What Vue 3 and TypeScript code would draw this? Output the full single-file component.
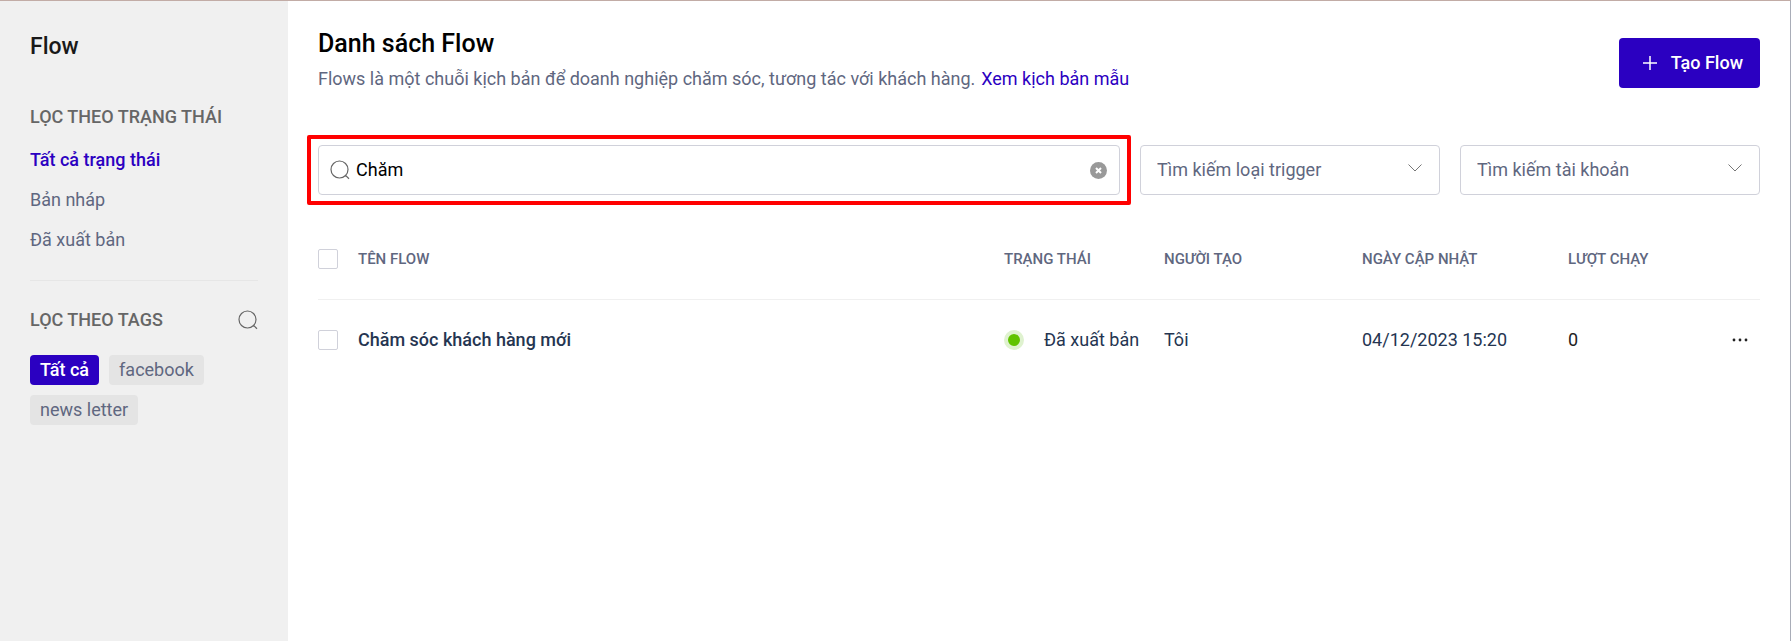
<script setup lang="ts">
import { computed, ref } from 'vue'

interface FlowRow {
  id: number
  name: string
  status: string
  author: string
  updatedAt: string
  runs: number
}

const statuses: string[] = ['Tất cả trạng thái', 'Bản nháp', 'Đã xuất bản']
const tags: string[] = ['Tất cả', 'facebook', 'news letter']

const activeStatus = ref('Tất cả trạng thái')
const activeTag = ref('Tất cả')
const keyword = ref('Chăm')
const trigger = ref('')
const account = ref('')
const selected = ref<number[]>([])

const rows: FlowRow[] = [
  {
    id: 1,
    name: 'Chăm sóc khách hàng mới',
    status: 'Đã xuất bản',
    author: 'Tôi',
    updatedAt: '04/12/2023 15:20',
    runs: 0,
  },
]

const visibleRows = computed(() =>
  rows.filter((row) => row.name.toLowerCase().includes(keyword.value.trim().toLowerCase())),
)

const allSelected = computed({
  get: () => visibleRows.value.length > 0 && selected.value.length === visibleRows.value.length,
  set: (value: boolean) => {
    selected.value = value ? visibleRows.value.map((row) => row.id) : []
  },
})
</script>

<template>
  <div class="layout">
    <aside class="sidebar">
      <h2 class="brand">Flow</h2>

      <h3 class="group-title">LỌC THEO TRẠNG THÁI</h3>
      <ul class="status-list">
        <li v-for="item in statuses" :key="item">
          <a
            href="#"
            class="status-link"
            :class="{ active: item === activeStatus }"
            @click.prevent="activeStatus = item"
          >{{ item }}</a>
        </li>
      </ul>

      <div class="tags-head">
        <h3 class="group-title">LỌC THEO TAGS</h3>
        <button type="button" class="icon-button" aria-label="Tìm tag">
          <svg class="search-icon" viewBox="0 0 20 20" aria-hidden="true">
            <circle cx="9.5" cy="9.5" r="8.5" />
            <path d="M15 15.8h1l3 2.900" />
          </svg>
        </button>
      </div>
      <div class="tags">
        <button
          v-for="tag in tags"
          :key="tag"
          type="button"
          class="tag"
          :class="{ active: tag === activeTag }"
          @click="activeTag = tag"
        >{{ tag }}</button>
      </div>
    </aside>

    <main class="main">
      <header class="header">
        <div class="intro">
          <h1 class="title">Danh sách Flow</h1>
          <p class="lead">
            <span>Flows là một chuỗi kịch bản để doanh nghiệp chăm sóc, tương tác với khách hàng.</span>
            <a href="#" class="sample-link">Xem kịch bản mẫu</a>
          </p>
        </div>
        <button type="button" class="create">
          <svg class="plus" viewBox="0 0 14 14" aria-hidden="true">
            <path d="M7 0v14M0 7h14" />
          </svg>
          <span>Tạo Flow</span>
        </button>
      </header>

      <div class="filters">
        <div class="search">
          <svg class="search-icon" viewBox="0 0 20 20" aria-hidden="true">
            <circle cx="9.5" cy="9.5" r="8.5" />
            <path d="M15 15.8h1l3 2.900" />
          </svg>
          <input v-model="keyword" type="text" class="search-input" aria-label="Tìm kiếm flow" />
          <button type="button" class="clear" aria-label="Xóa" @click="keyword = ''">
            <svg viewBox="0 0 17 17" aria-hidden="true">
              <circle cx="8.5" cy="8.5" r="8.5" />
              <path d="M6 6l5 5M11 6l-5 5" />
            </svg>
          </button>
        </div>
        <div class="select-box">
          <select v-model="trigger" class="select" aria-label="Loại trigger">
            <option value="">Tìm kiếm loại trigger</option>
          </select>
          <svg class="chevron" viewBox="0 0 14 8" aria-hidden="true"><path d="M.5 .5L7 7l6.500-6.500" /></svg>
        </div>
        <div class="select-box">
          <select v-model="account" class="select" aria-label="Tài khoản">
            <option value="">Tìm kiếm tài khoản</option>
          </select>
          <svg class="chevron" viewBox="0 0 14 8" aria-hidden="true"><path d="M.5 .5L7 7l6.500-6.500" /></svg>
        </div>
      </div>

      <table class="table">
        <colgroup>
          <col class="col-check" />
          <col />
          <col class="col-status" />
          <col class="col-author" />
          <col class="col-date" />
          <col class="col-runs" />
          <col class="col-more" />
        </colgroup>
        <thead>
          <tr>
            <th><input v-model="allSelected" type="checkbox" class="check" aria-label="Chọn tất cả" /></th>
            <th>TÊN FLOW</th>
            <th>TRẠNG THÁI</th>
            <th>NGƯỜI TẠO</th>
            <th>NGÀY CẬP NHẬT</th>
            <th>LƯỢT CHẠY</th>
            <th></th>
          </tr>
        </thead>
        <tbody>
          <tr v-for="row in visibleRows" :key="row.id">
            <td><input v-model="selected" type="checkbox" class="check" :value="row.id" :aria-label="row.name" /></td>
            <td class="name">{{ row.name }}</td>
            <td><span class="status"><i class="dot"></i>{{ row.status }}</span></td>
            <td>{{ row.author }}</td>
            <td>{{ row.updatedAt }}</td>
            <td class="runs">{{ row.runs }}</td>
            <td>
              <button type="button" class="more" aria-label="Thao tác">
                <svg viewBox="0 0 16 4" aria-hidden="true">
                  <circle cx="2" cy="2" r="1.400" />
                  <circle cx="8" cy="2" r="1.400" />
                  <circle cx="14" cy="2" r="1.400" />
                </svg>
              </button>
            </td>
          </tr>
        </tbody>
      </table>
    </main>
  </div>
</template>

<style>
body {
  margin: 0;
}
</style>

<style scoped>
* {
  box-sizing: border-box;
}

.layout {
  display: flex;
  min-height: 100vh;
  border-top: 1px solid #c2aca6;
  border-right: 1px solid #a9adb8;
  background: #fff;
  color: #253551;
  font-family: Roboto, "Liberation Sans", sans-serif;
  font-size: 18px;
  line-height: 30px;
}

h1,
h2,
h3,
p,
ul {
  margin: 0;
  padding: 0;
}

button,
input,
select {
  margin: 0;
  padding: 0;
  border: 0;
  background: none;
  color: inherit;
  font: inherit;
}

button {
  cursor: pointer;
}

svg {
  display: block;
}

.sidebar {
  flex: 0 0 288px;
  padding: 31px 30px;
  background: #f0f0f0;
}

.brand {
  margin-bottom: 40px;
  color: #191919;
  font-size: 23px;
  font-weight: 500;
}

.group-title {
  color: #666;
  font-size: 18px;
  font-weight: 500;
}

.status-list {
  display: grid;
  gap: 10px;
  margin-top: 13px;
  padding-bottom: 25px;
  border-bottom: 1px solid #e6e6e6;
  list-style: none;
}

.status-link {
  display: block;
  color: #5f6780;
  text-decoration: none;
}

.status-link.active {
  color: #2b00c1;
  font-weight: 500;
}

.tags-head {
  display: flex;
  align-items: center;
  justify-content: space-between;
  margin-top: 24px;
}

.search-icon {
  flex: none;
  width: 20px;
  height: 20px;
  fill: none;
  stroke: #666;
  stroke-width: 1.2;
}

.tags {
  display: flex;
  flex-wrap: wrap;
  gap: 10px;
  margin-top: 20px;
}

.tag {
  padding: 0 10px;
  border-radius: 4px;
  background: #e4e4e4;
  color: #5f6780;
}

.tag.active {
  background: #2b00c1;
  color: #fff;
  font-weight: 500;
}

.main {
  flex: 1;
  min-width: 0;
  padding: 27px 30px;
}

.header {
  display: flex;
  align-items: flex-end;
  justify-content: space-between;
  padding-bottom: 6px;
}

.title {
  color: #000;
  font-size: 25px;
  font-weight: 500;
  line-height: 32px;
}

.lead {
  display: flex;
  gap: 6px;
  margin-top: 4px;
  margin-bottom: -6px;
  color: #5f6780;
}

.sample-link {
  color: #2b00c1;
  text-decoration: none;
}

.create {
  display: flex;
  align-items: center;
  gap: 14px;
  height: 50px;
  padding: 0 17px 0 24px;
  border-radius: 4px;
  background: #2b00c1;
  color: #fff;
  font-weight: 500;
}

.plus {
  width: 14px;
  height: 14px;
  fill: none;
  stroke: #fff;
  stroke-width: 1.5;
}

.filters {
  display: flex;
  gap: 20px;
  margin-top: 51px;
}

.search {
  position: relative;
  display: flex;
  flex: 1;
  align-items: center;
  gap: 6px;
  height: 50px;
  padding: 0 12px 0 11px;
  border: 1px solid #d0d1da;
  border-radius: 4px;
}

.search::after {
  position: absolute;
  inset: -11px -12px;
  border: 4px solid #f00;
  border-radius: 2px;
  content: "";
  pointer-events: none;
}

.search-input {
  flex: 1;
  min-width: 0;
  color: #000;
  outline: none;
}

.clear svg {
  width: 17px;
  height: 17px;
  fill: #999;
  stroke: #fff;
  stroke-width: 2;
}

.clear circle {
  stroke: none;
}

.select-box {
  position: relative;
  flex: 0 0 300px;
}

.select {
  display: block;
  width: 100%;
  height: 50px;
  padding: 0 40px 0 16px;
  border: 1px solid #d0d1da;
  border-radius: 4px;
  background: #fff;
  color: #5f6780;
  appearance: none;
}

.chevron {
  position: absolute;
  top: 19px;
  right: 18px;
  width: 14px;
  height: 8px;
  fill: none;
  stroke: #777;
  pointer-events: none;
}

.table {
  width: 100%;
  margin-top: 24px;
  border-collapse: collapse;
  table-layout: fixed;
}

.col-check {
  width: 40px;
}

.col-status {
  width: 160px;
}

.col-author {
  width: 198px;
}

.col-date {
  width: 206px;
}

.col-runs {
  width: 122px;
}

.col-more {
  width: 70px;
}

th,
td {
  padding: 0;
  text-align: left;
  white-space: nowrap;
}

th {
  height: 80px;
  border-bottom: 1px solid #f0f0f0;
  color: #5f6780;
  font-size: 15px;
  font-weight: 500;
}

td {
  height: 82px;
}

.check {
  display: block;
  width: 20px;
  height: 20px;
  border: 1px solid #d0d1da;
  border-radius: 2px;
  background: #fff;
  appearance: none;
}

.check:checked {
  background: #2b00c1;
}

.name {
  font-weight: 500;
}

.status {
  display: flex;
  align-items: center;
  gap: 20px;
}

.dot {
  width: 20px;
  height: 20px;
  border: 4px solid #dff2cf;
  border-radius: 50%;
  background: #61c300;
}

.runs {
  color: #222;
}

.more {
  display: block;
  margin-left: auto;
  padding: 10px 12px;
}

.more svg {
  width: 16px;
  height: 4px;
  fill: #222;
}
</style>
